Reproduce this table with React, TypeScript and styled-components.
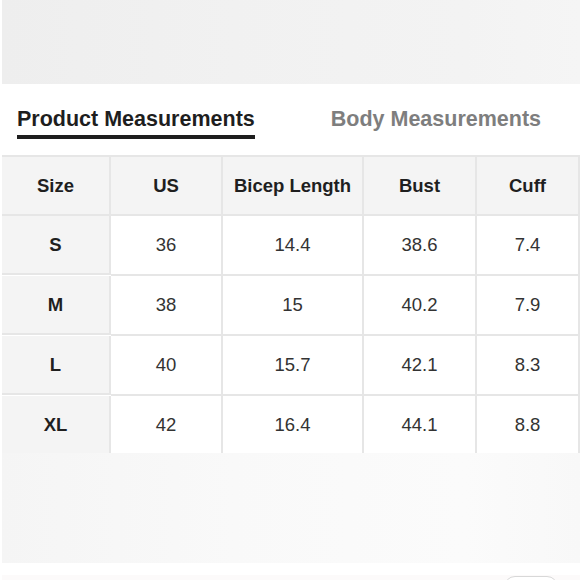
import styled, { createGlobalStyle } from 'styled-components';

const GlobalStyle = createGlobalStyle`
  html, body {
    margin: 0;
    padding: 0;
    background: #ffffff;
  }
  body {
    font-family: "Liberation Sans", Arial, sans-serif;
    color: #222;
  }
`;

const Page = styled.div`
  width: 580px;
  height: 580px;
  overflow: hidden;
  display: flex;
  flex-direction: column;
`;

// 상하단의 흐릿한 이미지 영역
const Band = styled.div<{ $height: number; $light?: boolean }>`
  height: ${({ $height }) => $height}px;
  margin-left: 2px;
  flex-shrink: 0;
  background: ${({ $light }) =>
    $light
      ? 'linear-gradient(90deg, #f5f5f5 0%, #f9f9f9 40%, #fbfbfb 80%, #f8f8f8 100%)'
      : 'linear-gradient(90deg, #eeeeee 0%, #f1f1f1 40%, #f3f3f3 80%, #f5f5f5 100%)'};
`;

const TabBar = styled.div`
  height: 71px;
  display: flex;
  align-items: flex-start;
  padding: 23px 0 0 17px;
  box-sizing: border-box;
  flex-shrink: 0;
`;

const Tab = styled.div<{ $active?: boolean; $offset?: number }>`
  margin-left: ${({ $offset }) => $offset ?? 0}px;
  font-size: 21.5px;
  font-weight: 700;
  line-height: 24px;
  color: ${({ $active }) => ($active ? '#1e1e1e' : '#7e7e7e')};
  padding-bottom: 4px;
  border-bottom: 4px solid ${({ $active }) => ($active ? '#1e1e1e' : 'transparent')};
`;

const Table = styled.div`
  margin-left: 2px;
  width: 578px;
  display: grid;
  grid-template-columns: 109px 112px 141px 113px 103px;
  border-top: 2px solid #e6e6e6;
  flex-shrink: 0;
`;

const Cell = styled.div<{ $head?: boolean; $shaded?: boolean; $last?: boolean }>`
  height: ${({ $head, $last }) => ($head ? 57 : $last ? 57 : 58)}px;
  display: flex;
  align-items: center;
  justify-content: center;
  font-size: 18.5px;
  font-weight: ${({ $head }) => ($head ? 700 : 400)};
  color: ${({ $head }) => ($head ? '#1f1f1f' : '#333333')};
  background: ${({ $shaded }) => ($shaded ? '#f4f4f4' : '#ffffff')};
  border-right: 2px solid #e6e6e6;
  border-bottom: ${({ $last }) => ($last ? '0' : '2px solid #e6e6e6')};
`;

const Footer = styled.div`
  height: 12px;
  flex-shrink: 0;
`;

const FooterStrip = styled.div`
  flex: 1;
  margin-left: 2px;
  background: #fcfafa;
  display: flex;
  justify-content: flex-end;
  padding-right: 22px;
`;

const Pill = styled.div`
  width: 52px;
  height: 20px;
  margin-top: 1px;
  border: 1px solid #d8d8d8;
  border-radius: 12px;
  background: #ffffff;
`;

const headers = ['Size', 'US', 'Bicep Length', 'Bust', 'Cuff'];

const rows = [
  ['S', '36', '14.4', '38.6', '7.4'],
  ['M', '38', '15', '40.2', '7.9'],
  ['L', '40', '15.7', '42.1', '8.3'],
  ['XL', '42', '16.4', '44.1', '8.8'],
];

const App = () => {
  return (
    <>
      <GlobalStyle />
      <Page>
        <Band $height={84} />

        <TabBar>
          <Tab $active>Product Measurements</Tab>
          <Tab $offset={76}>Body Measurements</Tab>
        </TabBar>

        <Table>
          {headers.map((h) => (
            <Cell key={h} $head $shaded>
              {h}
            </Cell>
          ))}
          {rows.map((row, r) =>
            row.map((value, c) => (
              <Cell
                key={`${r}-${c}`}
                $head={c === 0}
                $shaded={c === 0}
                $last={r === rows.length - 1}
              >
                {value}
              </Cell>
            ))
          )}
        </Table>

        <Band $height={110} $light />
        <Footer />
        <FooterStrip>
          <Pill />
        </FooterStrip>
      </Page>
    </>
  );
};

export default App;
